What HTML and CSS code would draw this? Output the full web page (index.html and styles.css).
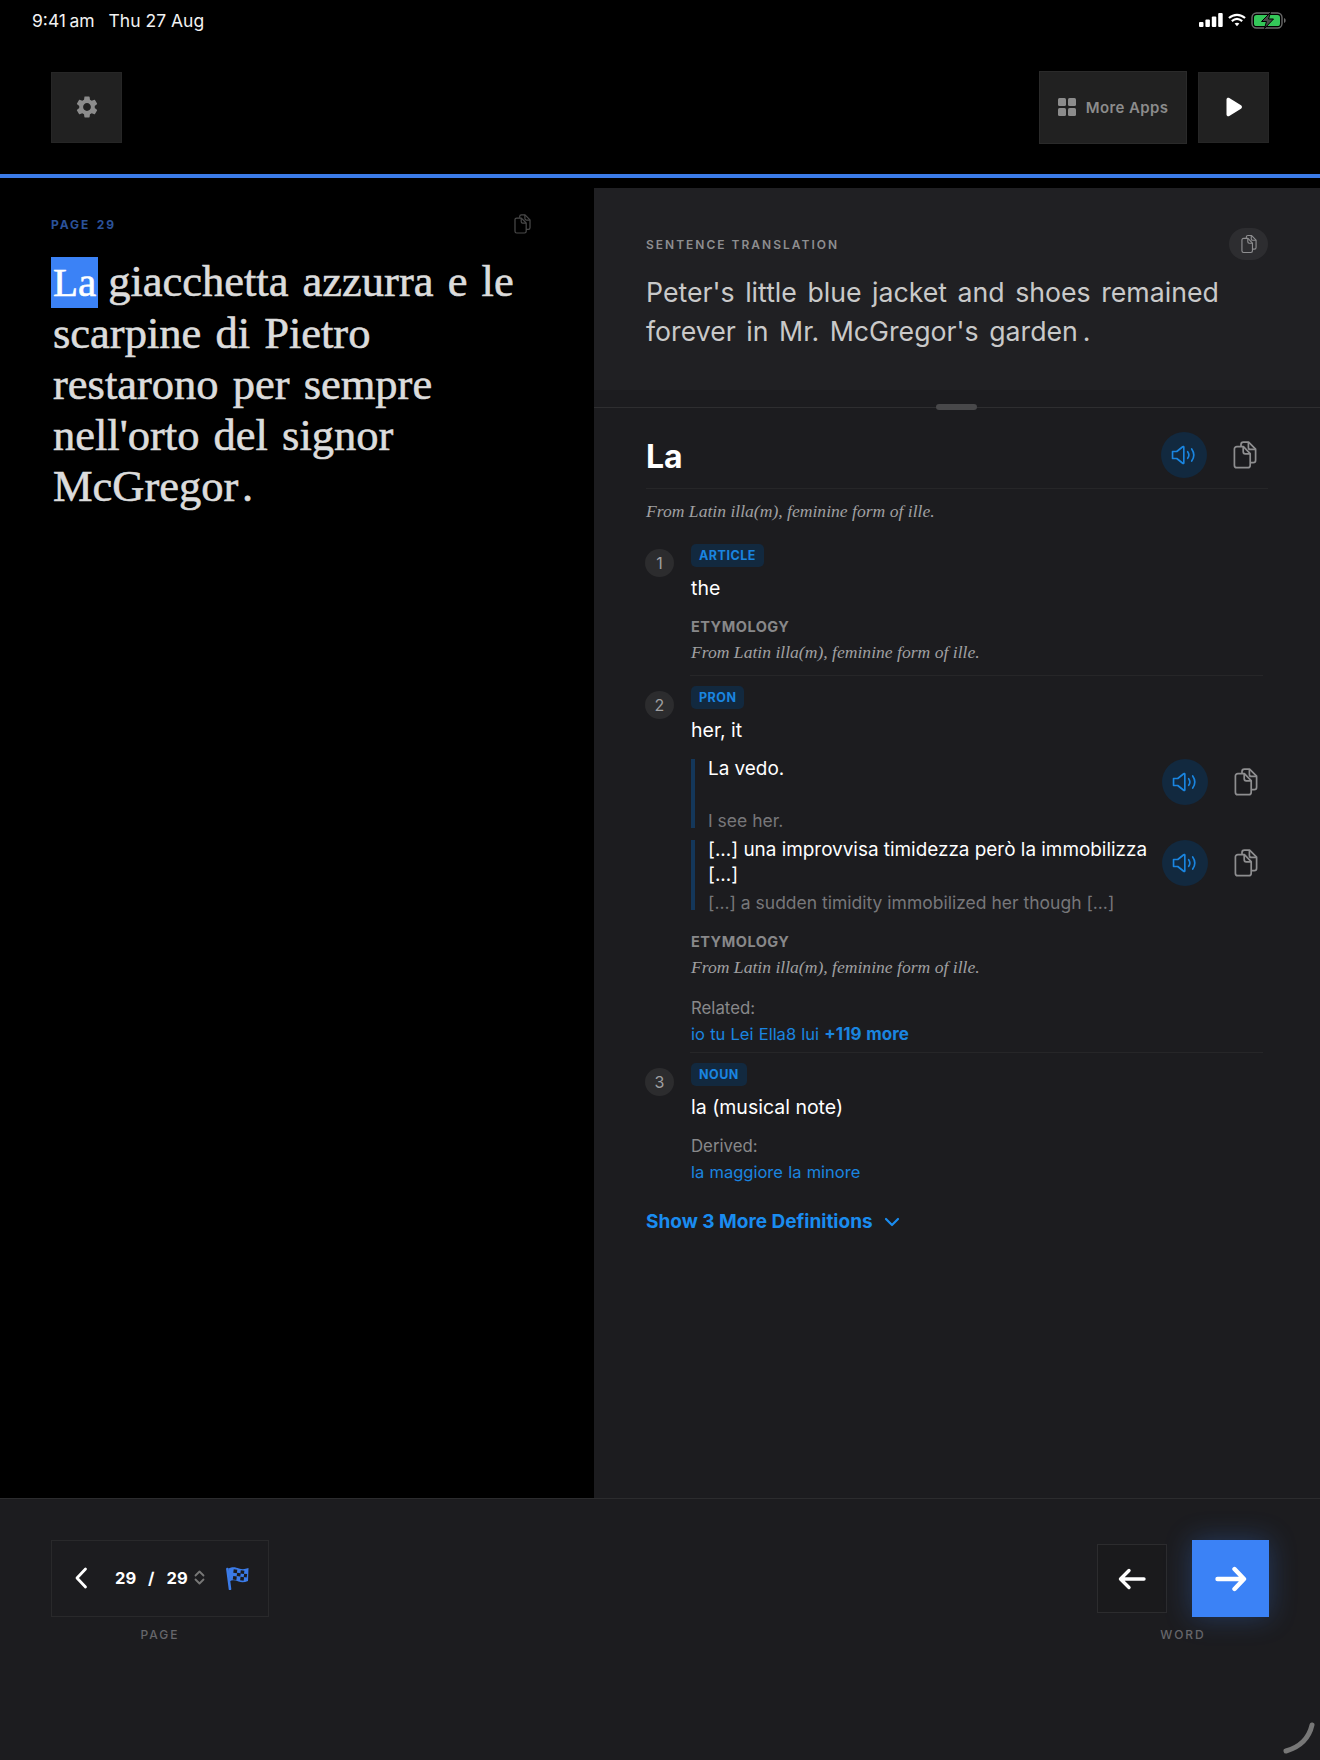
FILE: index.html
```html
<!DOCTYPE html>
<html lang="en">
<head>
  <meta charset="utf-8">
  <title>Reader</title>
  <link rel="stylesheet" href="styles.css">
</head>
<body>

<svg class="defs" width="0" height="0">
  <symbol id="copy" viewBox="0 0 24 28">
    <path d="M8 5V3.6C8 2.2 9 1.2 10.4 1.2h5.2l7 7v11c0 1.4-1 2.4-2.4 2.4H17" fill="none" stroke="currentColor" stroke-width="1.7" stroke-linejoin="round"/>
    <path d="M15.4 1.4v5c0 1.2.8 2 2 2h5" fill="none" stroke="currentColor" stroke-width="1.7"/>
    <path d="M3.8 5.6h6.6l6.8 7v11.6c0 1.4-1 2.5-2.4 2.5h-11c-1.4 0-2.4-1.1-2.4-2.5V8c0-1.4 1-2.4 2.4-2.4z" fill="none" stroke="currentColor" stroke-width="1.7" stroke-linejoin="round"/>
    <path d="M10.2 5.8v5c0 1.2.8 2 2 2h4.8" fill="none" stroke="currentColor" stroke-width="1.7"/>
  </symbol>
  <symbol id="speaker" viewBox="0 0 28 24">
    <path d="M1.5 8.2h4.6L12.6 3c.6-.5 1.2-.2 1.2.6v16.8c0 .8-.6 1.1-1.2.6l-6.5-5.2H1.5z" fill="none" stroke="currentColor" stroke-width="1.8" stroke-linejoin="round"/>
    <path d="M18 8.4c1.6 2.2 1.6 5 0 7.2M22.4 5.4c2.8 4 2.8 9.2 0 13.2" fill="none" stroke="currentColor" stroke-width="1.8" stroke-linecap="round"/>
  </symbol>
</svg>

<header class="status-bar">
  <div class="status-time"><span class="clock">9:41 am</span><span>Thu 27 Aug</span></div>
  <div class="status-icons">
    <svg width="24" height="14" viewBox="0 0 24 14" fill="#fff">
      <rect x="0" y="9" width="4.5" height="5" rx="1"/>
      <rect x="6.4" y="6.5" width="4.5" height="7.5" rx="1"/>
      <rect x="12.8" y="3.5" width="4.5" height="10.5" rx="1"/>
      <rect x="19.2" y="0" width="4.5" height="14" rx="1"/>
    </svg>
    <svg width="18" height="14" viewBox="0 0 19 14" fill="none" stroke="#fff" stroke-width="2.2">
      <path d="M1 5c5-4.6 12-4.6 17 0"/>
      <path d="M4 8.2c3.4-3 7.6-3 11 0"/>
      <path d="M9.5 13.6 7 10.8c1.5-1.2 3.5-1.2 5 0z" fill="#fff" stroke="none"/>
    </svg>
    <svg width="35" height="17" viewBox="0 0 35 17">
      <rect x="1" y="1" width="30" height="15" rx="4.5" fill="none" stroke="#6a6a6a" stroke-width="1.4"/>
      <rect x="3" y="3" width="26" height="11" rx="2.6" fill="#34c759"/>
      <path d="M33 6c1.2.4 1.6 1.2 1.6 2.5S34.200 10.600 33 11z" fill="#6a6a6a"/>
      <path d="M19.500 .5 10.500 9.500h5l-2 7 9-9.500h-5z" fill="#4a4a4a" stroke="#000" stroke-width="1"/>
    </svg>
  </div>
</header>

<nav class="toolbar">
  <button class="tool-btn tool-square">
    <svg width="26" height="26" viewBox="0 0 24 24" fill="#8c8c8c"><path d="M19.14 12.94c.04-.3.06-.61.06-.94 0-.32-.02-.64-.07-.94l2.03-1.58a.49.49 0 0 0 .12-.61l-1.92-3.32a.488.488 0 0 0-.59-.22l-2.39.96c-.5-.38-1.03-.7-1.62-.94l-.36-2.54a.484.484 0 0 0-.48-.41h-3.84c-.24 0-.43.17-.47.41l-.36 2.54c-.59.24-1.13.57-1.62.94l-2.39-.96c-.22-.08-.47 0-.59.22L2.74 8.87c-.12.21-.08.47.12.61l2.03 1.58c-.05.3-.09.63-.09.94s.02.64.07.94l-2.03 1.58a.49.49 0 0 0-.12.61l1.92 3.32c.12.22.37.29.59.22l2.39-.96c.5.38 1.03.7 1.62.94l.36 2.54c.05.24.24.41.48.41h3.84c.24 0 .44-.17.47-.41l.36-2.54c.59-.24 1.13-.56 1.62-.94l2.39.96c.22.08.47 0 .59-.22l1.92-3.32c.12-.22.07-.47-.12-.61l-2.01-1.58zM12 15.6c-1.98 0-3.6-1.62-3.6-3.6s1.62-3.6 3.6-3.6 3.6 1.62 3.6 3.6-1.62 3.6-3.6 3.6z"/></svg>
  </button>
  <div class="toolbar-right">
    <button class="tool-btn tool-apps">
      <svg width="18" height="18" viewBox="0 0 18 18" fill="#8c8c8c">
        <rect width="8" height="8" rx="1.5"/>
        <rect x="10" width="8" height="8" rx="1.5"/>
        <rect y="10" width="8" height="8" rx="1.5"/>
        <rect x="10" y="10" width="8" height="8" rx="1.5"/>
      </svg>
      More Apps
    </button>
    <button class="tool-btn tool-square">
      <svg width="18" height="20" viewBox="0 0 18 20" fill="#fff"><path d="M1.500 2.500C1.500 1 3 .3 4.300 1l11.700 7.200c1.300.8 1.300 2.800 0 3.600L4.300 19c-1.300.7-2.800 0-2.800-1.500z"/></svg>
    </button>
  </div>
</nav>

<div class="progress"></div>

<main class="main">
  <section class="reader">
    <div class="reader-head">
      <span class="page-label">PAGE 29</span>
      <svg class="copy-dim" width="17" height="20"><use href="#copy"/></svg>
    </div>
    <p class="reader-text">
      <span class="word word-on">La</span>
      <span class="word">giacchetta</span>
      <span class="word">azzurra</span>
      <span class="word">e</span>
      <span class="word">le</span>
      <span class="word">scarpine</span>
      <span class="word">di</span>
      <span class="word">Pietro</span>
      <span class="word">restarono</span>
      <span class="word">per</span>
      <span class="word">sempre</span>
      <span class="word">nell'orto</span>
      <span class="word">del</span>
      <span class="word">signor</span>
      <span class="word">McGregor&#8202;.</span>
    </p>
  </section>

  <section class="side">
    <div class="translation">
      <div class="translation-head">
        <span class="translation-label">SENTENCE TRANSLATION</span>
        <span class="copy-pill"><svg width="16" height="20"><use href="#copy"/></svg></span>
      </div>
      <p class="translation-text">Peter's little blue jacket and shoes remained forever in Mr. McGregor's garden&#8201;.</p>
    </div>

    <div class="entry">
      <span class="handle"></span>
      <div class="entry-head">
        <h2 class="entry-word">La</h2>
        <div class="actions">
          <span class="audio"><svg width="26" height="22"><use href="#speaker"/></svg></span>
          <svg class="copy-icon" width="24" height="28"><use href="#copy"/></svg>
        </div>
      </div>
      <p class="origin origin-top">From Latin illa(m), feminine form of ille.</p>

      <div class="senses">
        <div class="sense">
          <span class="num">1</span>
          <div class="sense-body">
            <span class="tag">ARTICLE</span>
            <p class="gloss">the</p>
            <h3 class="sub-head">ETYMOLOGY</h3>
            <p class="origin">From Latin illa(m), feminine form of ille.</p>
          </div>
        </div>

        <div class="sense sense-long">
          <span class="num">2</span>
          <div class="sense-body">
            <span class="tag">PRON</span>
            <p class="gloss">her, it</p>
            <div class="example">
              <div class="example-text">
                <p class="example-src">La vedo.</p>
                <p class="example-en">I see her.</p>
              </div>
              <div class="actions">
                <span class="audio"><svg width="26" height="22"><use href="#speaker"/></svg></span>
                <svg class="copy-icon" width="24" height="28"><use href="#copy"/></svg>
              </div>
            </div>
            <div class="example example-next">
              <div class="example-text">
                <p class="example-src">[...] una improvvisa timidezza però la immobilizza [...]</p>
                <p class="example-en">[...] a sudden timidity immobilized her though [...]</p>
              </div>
              <div class="actions">
                <span class="audio"><svg width="26" height="22"><use href="#speaker"/></svg></span>
                <svg class="copy-icon" width="24" height="28"><use href="#copy"/></svg>
              </div>
            </div>
            <h3 class="sub-head sub-head-far">ETYMOLOGY</h3>
            <p class="origin">From Latin illa(m), feminine form of ille.</p>
            <p class="rel-label">Related:</p>
            <p class="rel-links">io tu Lei Ella8 lui <b>+119 more</b></p>
          </div>
        </div>

        <div class="sense sense-last">
          <span class="num">3</span>
          <div class="sense-body">
            <span class="tag">NOUN</span>
            <p class="gloss">la (musical note)</p>
            <p class="rel-label rel-label-near">Derived:</p>
            <p class="rel-links">la maggiore la minore</p>
          </div>
        </div>
      </div>

      <a class="show-more">Show 3 More Definitions
        <svg width="16" height="10" viewBox="0 0 16 10" fill="none" stroke="currentColor" stroke-width="2.2" stroke-linecap="round" stroke-linejoin="round"><path d="M2 2l6 6 6-6"/></svg>
      </a>
    </div>
  </section>
</main>

<footer class="footer">
  <div class="foot-group">
    <div class="pager">
      <svg class="pager-back" width="14" height="22" viewBox="0 0 14 22" fill="none" stroke="#fff" stroke-width="2.800" stroke-linecap="round" stroke-linejoin="round"><path d="M11.500 2 3 11l8.500 9"/></svg>
      <span class="pager-count"><span>29</span><span>/</span><span>29</span></span>
      <svg class="pager-step" width="11" height="15" viewBox="0 0 11 15" fill="none" stroke="#777" stroke-width="1.800" stroke-linecap="round" stroke-linejoin="round"><path d="M1.500 5.500 5.500 1.500l4 4M1.500 9.500l4 4 4-4"/></svg>
      <svg class="pager-flag" width="23" height="24" viewBox="0 0 23 24">
        <path d="M2.500 2.500C7 .2 10 1.500 13 2.500c3 1 6 .8 9.500-.5l-.5 13c-3.500 1.400-6.500 1.500-9.500.5-3-1-6-2-9 0z" fill="#3b7be8"/>
        <path d="M1.400 3 4 23" stroke="#3b7be8" stroke-width="2.600" stroke-linecap="round"/>
        <g fill="#1c1c1f">
          <rect x="7.500" y="3.500" width="3.600" height="3.400" transform="rotate(8 9 5)"/>
          <rect x="14.600" y="4.400" width="3.600" height="3.400" transform="rotate(8 16 6)"/>
          <rect x="11" y="6.900" width="3.600" height="3.400" transform="rotate(8 13 8)"/>
          <rect x="18" y="7.800" width="3" height="3.400" transform="rotate(8 19 9)"/>
          <rect x="7" y="10.300" width="3.600" height="3.400" transform="rotate(8 9 12)"/>
          <rect x="14.400" y="11" width="3.600" height="3.400" transform="rotate(8 16 12)"/>
        </g>
      </svg>
    </div>
    <span class="foot-label">PAGE</span>
  </div>

  <div class="foot-group">
    <div class="word-nav">
      <button class="word-btn">
        <svg width="28" height="22" viewBox="0 0 28 22" fill="none" stroke="#fff" stroke-width="3.400" stroke-linecap="round" stroke-linejoin="round"><path d="M26 11H3M11 2.500 2.500 11l8.500 8.500"/></svg>
      </button>
      <button class="word-btn word-btn-next">
        <svg width="32" height="26" viewBox="0 0 32 26" fill="none" stroke="#fff" stroke-width="4.400" stroke-linecap="round" stroke-linejoin="round"><path d="M2.500 13H28M19.500 3 29 13l-9.500 10"/></svg>
      </button>
    </div>
    <span class="foot-label">WORD</span>
  </div>

  <svg class="corner" width="36" height="36" viewBox="0 0 36 36" fill="none" stroke="#777" stroke-width="5" stroke-linecap="round"><path d="M31 4C28 17 19 26 5 30"/></svg>
</footer>

</body>
</html>
```

FILE: styles.css
```css
* {
  box-sizing: border-box;
}
html,
body {
  margin: 0;
  height: 100%;
}
body {
  width: 1320px;
  height: 1760px;
  display: flex;
  flex-direction: column;
  overflow: hidden;
  background-color: #000;
  color: #fff;
  font-family: Inter, "Liberation Sans", sans-serif;
}
p,
h2,
h3 {
  margin: 0;
}
button {
  padding: 0;
  font-family: inherit;
  cursor: pointer;
}
.defs {
  position: absolute;
}

/* status bar */
.status-bar {
  height: 40px;
  padding: 0 34px 0 32px;
  display: flex;
  justify-content: space-between;
  align-items: center;
}
.status-time {
  display: flex;
  gap: 14px;
  font-size: 17.5px;
  color: #f2f2f2;
}
.clock {
  word-spacing: -1.5px;
}
.status-icons {
  display: flex;
  align-items: center;
  gap: 5px;
}

/* top toolbar */
.toolbar {
  height: 134px;
  padding: 0 51px;
  display: flex;
  justify-content: space-between;
  align-items: center;
}
.toolbar-right {
  display: flex;
  align-items: center;
  gap: 11px;
}
.tool-btn {
  height: 71px;
  border: 1px solid #262626;
  background-color: #212121;
  display: flex;
  align-items: center;
  justify-content: center;
}
.tool-square {
  width: 71px;
}
.tool-apps {
  width: 148px;
  height: 73px;
  gap: 10px;
  color: #8c8c8c;
  font-size: 15px;
  font-weight: 600;
  letter-spacing: 0.4px;
  border-color: #2a2a2a;
}
.progress {
  height: 4px;
  background-color: #3b7be8;
}

/* main area */
.main {
  flex: 1;
  display: flex;
  min-height: 0;
}
.reader {
  width: 594px;
  padding: 36px 60px 0 51px;
}
.reader-head {
  width: 480px;
  height: 20px;
  display: flex;
  justify-content: space-between;
  align-items: center;
}
.page-label {
  font-size: 12px;
  font-weight: 700;
  letter-spacing: 1.9px;
  word-spacing: 2px;
  color: #2b5299;
}
.copy-dim {
  color: #4a4a4a;
}
.reader-text {
  margin: 22px 0 0 2px;
  font-family: "Liberation Serif", serif;
  font-size: 44.5px;
  line-height: 51px;
  word-spacing: 3px;
  color: #dcdcdc;
  -webkit-text-stroke: 0.6px #dcdcdc;
}
.word-on {
  display: inline-block;
  width: 47px;
  margin: 0 -4px 0 -2px;
  padding-left: 2px;
  background-color: #3b82f6;
  color: #fff;
  font-size: 41px;
  -webkit-text-stroke: 0.6px #fff;
}

/* right column */
.side {
  flex: 1;
  margin-top: 10px;
  background-color: #1c1c1f;
}
.translation {
  height: 202px;
  padding: 40px 52px 0 52px;
  background-color: #202023;
}
.translation-head {
  display: flex;
  justify-content: space-between;
  align-items: center;
  height: 32px;
}
.translation-label {
  font-size: 12px;
  font-weight: 600;
  letter-spacing: 2px;
  color: #8e8e90;
}
.copy-pill {
  width: 39px;
  height: 32px;
  border-radius: 16px;
  background-color: #2d2d30;
  color: #8e8e90;
  display: flex;
  align-items: center;
  justify-content: center;
}
.translation-text {
  margin-top: 13px;
  font-size: 26.7px;
  line-height: 39px;
  word-spacing: 3px;
  color: #c9c9c9;
}

/* dictionary entry */
.entry {
  position: relative;
  margin-top: 17px;
  padding: 0 52px;
  border-top: 1px solid #2e2e30;
}
.handle {
  position: absolute;
  top: -4px;
  left: 342px;
  width: 41px;
  height: 6px;
  border-radius: 3px;
  background-color: #48484a;
}
.entry-head {
  height: 81px;
  padding-top: 24px;
  display: flex;
  justify-content: space-between;
  align-items: flex-start;
  border-bottom: 1px solid #262628;
}
.entry-word {
  margin-top: 5px;
  font-size: 32px;
  line-height: 40px;
  font-weight: 700;
}
.actions {
  flex: none;
  align-self: flex-start;
  display: flex;
  align-items: center;
  gap: 26px;
  padding-right: 11px;
}
.audio {
  width: 46px;
  height: 46px;
  border-radius: 50%;
  background-color: #12293f;
  color: #1a85e0;
  display: flex;
  align-items: center;
  justify-content: center;
}
.copy-icon {
  color: #8e8e90;
}
.origin {
  margin-top: 3px;
  font-family: "Liberation Serif", serif;
  font-style: italic;
  font-size: 17.6px;
  line-height: 24px;
  color: #a0a0a2;
}
.origin-top {
  margin-top: 10px;
}
.senses {
  margin: 11px 5px 0 0;
}
.sense {
  position: relative;
  display: flex;
  padding: 10px 0 12px;
}
.sense-long {
  padding-bottom: 9px;
}
.sense::after {
  content: "";
  position: absolute;
  left: 44px;
  right: 0;
  bottom: 0;
  border-bottom: 1px solid #262628;
}
.sense-last::after {
  display: none;
}
.sense-body {
  flex: 1;
  min-width: 0;
}
.num {
  flex: none;
  width: 29px;
  height: 28px;
  margin: 5px 17px 0 -1px;
  border-radius: 50%;
  background-color: #2c2c2e;
  color: #a0a0a2;
  font-size: 16px;
  display: flex;
  align-items: center;
  justify-content: center;
}
.tag {
  display: inline-block;
  height: 23px;
  padding: 0 8px;
  border-radius: 5px;
  background-color: #12293f;
  color: #1a85e0;
  font-size: 12.5px;
  line-height: 23px;
  font-weight: 700;
  letter-spacing: 0.5px;
  vertical-align: top;
}
.gloss {
  margin-top: 8px;
  font-size: 19.5px;
  line-height: 26px;
}
.sub-head {
  margin-top: 16px;
  font-size: 14.5px;
  line-height: 20px;
  font-weight: 700;
  letter-spacing: 0.5px;
  color: #88888a;
}
.sub-head-far {
  margin-top: 22px;
}
.example {
  margin-top: 16px;
  display: flex;
  justify-content: space-between;
  border-left: 4px solid #14375a;
  padding-left: 13px;
}
.example-next {
  margin-top: 12px;
}
.example-text {
  width: 446px;
  margin: -3px 0;
}
.example-src {
  min-height: 49px;
  font-size: 18.9px;
  line-height: 25px;
}
.example-en {
  margin-top: 6px;
  font-size: 17.5px;
  line-height: 20px;
  color: #77777a;
}
.example .actions {
  padding-right: 5px;
}
.rel-label {
  margin-top: 19px;
  font-size: 16.8px;
  line-height: 20px;
  color: #88888a;
}
.rel-label-near {
  margin-top: 16px;
}
.rel-links {
  margin-top: 6px;
  font-size: 16.5px;
  line-height: 20px;
  word-spacing: 0.6px;
  color: #1a85e0;
}
.rel-links b {
  font-size: 17px;
  font-weight: 700;
}
.show-more {
  margin-top: 15px;
  display: flex;
  align-items: center;
  gap: 11px;
  font-size: 19px;
  line-height: 26px;
  font-weight: 700;
  color: #1a8cf0;
}

/* footer */
.footer {
  position: relative;
  height: 262px;
  padding: 41px 51px 0;
  display: flex;
  justify-content: space-between;
  align-items: flex-start;
  background-color: #1c1c1f;
  border-top: 1px solid #2c2c2e;
}
.foot-group {
  display: flex;
  flex-direction: column;
  align-items: center;
}
.foot-label {
  margin-top: 10px;
  font-size: 12px;
  line-height: 16px;
  font-weight: 500;
  letter-spacing: 2px;
  color: #66666a;
}
.pager {
  width: 218px;
  height: 77px;
  padding: 0 0 2px 22px;
  display: flex;
  align-items: center;
  border: 1px solid #29292b;
}
.pager-count {
  margin-left: 27px;
  display: flex;
  gap: 12px;
  font-size: 16.5px;
  font-weight: 700;
}
.pager-step {
  margin-left: 6px;
}
.pager-flag {
  margin-left: 21px;
}
.word-nav {
  display: flex;
  align-items: center;
  gap: 25px;
}
.word-btn {
  width: 70px;
  height: 69px;
  border: 1px solid #2c2c2e;
  background-color: #1a1a1c;
  display: flex;
  align-items: center;
  justify-content: center;
}
.word-btn-next {
  width: 77px;
  height: 77px;
  border: none;
  background-color: #3b82f6;
  box-shadow: 0 0 28px rgba(59, 130, 246, 0.3);
}
.corner {
  position: absolute;
  right: 3px;
  bottom: 3px;
}
```
